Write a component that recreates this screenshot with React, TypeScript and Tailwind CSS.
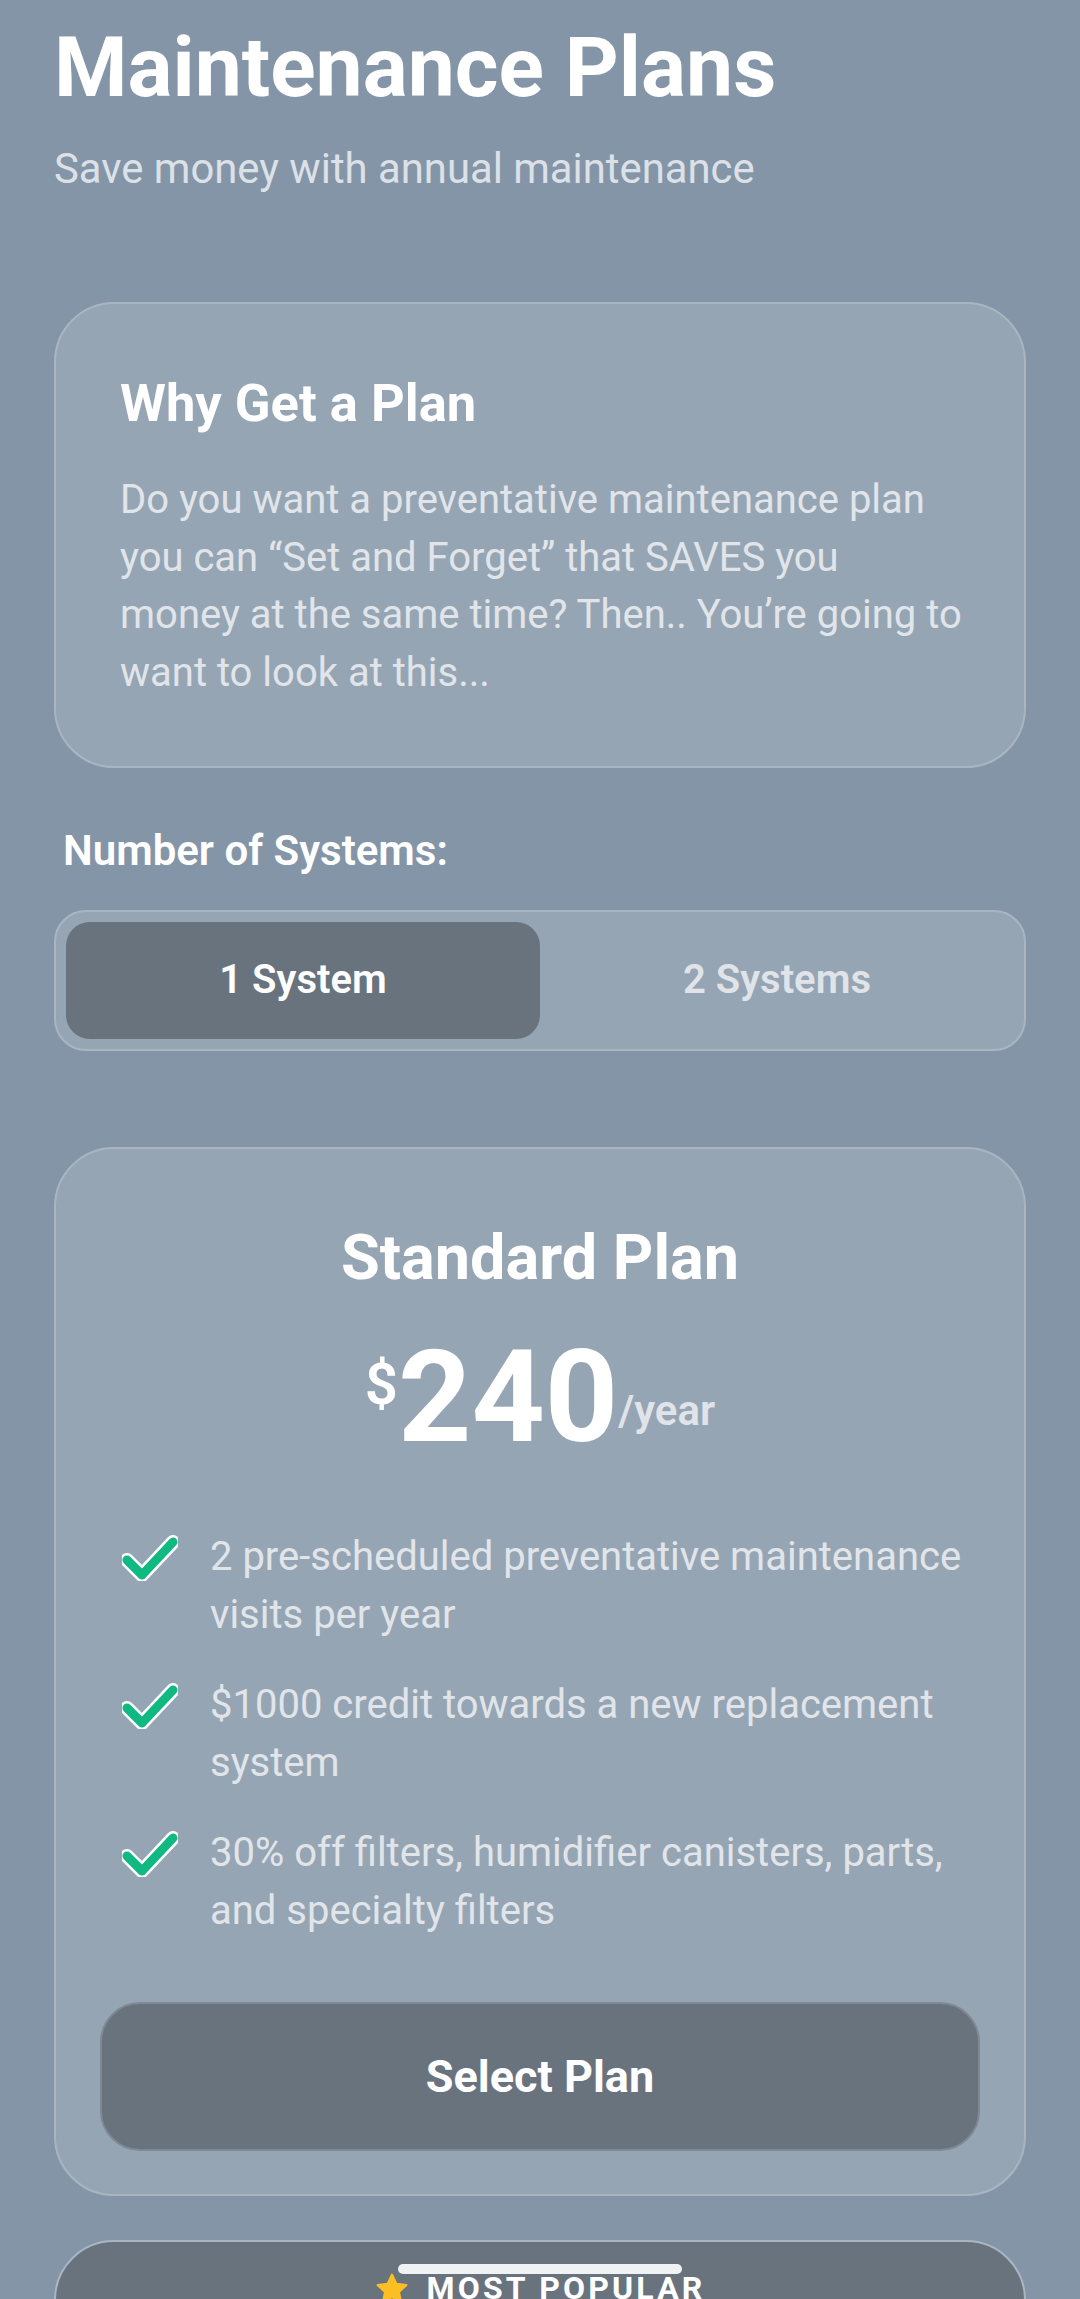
import { useState } from "react"

const features = [
  "2 pre-scheduled preventative maintenance visits per year",
  "$1000 credit towards a new replacement system",
  "30% off filters, humidifier canisters, parts, and specialty filters",
]

function Check() {
  return (
    <svg width="56" height="46" viewBox="0 0 56 46" className="shrink-0 mt-[7px]">
      <polyline points="5,25 20,40 51,7" fill="none" stroke="#ffffff" strokeWidth="14" strokeLinecap="round" strokeLinejoin="round" />
      <polyline points="5,25 20,40 51,7" fill="none" stroke="#10b981" strokeWidth="9" strokeLinecap="round" strokeLinejoin="round" />
    </svg>
  )
}

function Star() {
  return (
    <svg width="36" height="36" viewBox="0 0 24 24" className="shrink-0">
      <path
        d="M12 2.5l2.9 6.1 6.6.8-4.9 4.6 1.3 6.6L12 17.3l-5.9 3.3 1.3-6.6-4.9-4.6 6.6-.8z"
        fill="#fbbf24"
        stroke="#fbbf24"
        strokeWidth="1.5"
        strokeLinejoin="round"
      />
    </svg>
  )
}

export default function App() {
  const [systems, setSystems] = useState(1)

  return (
    <div className="relative h-[2299px] overflow-hidden bg-[#8495a7] px-[54px] [font-family:Roboto,sans-serif]">
      {/* Header */}
      <h1 className="pt-[18px] text-[84px] leading-[1.2] font-bold text-white">Maintenance Plans</h1>
      <p className="mt-[19px] text-[41.8px] leading-[1.5] text-[#dce1e7]">Save money with annual maintenance</p>

      {/* Intro card */}
      <div className="mt-[102px] rounded-[60px] border-2 border-[#a9b6c2] bg-[#95a5b4] pl-[64px] pr-[56px] pt-[68px] pb-[65px]">
        <h2 className="text-[52.5px] leading-[1.2] font-bold text-white">Why Get a Plan</h2>
        <p className="mt-[36px] text-[40px] leading-[57.5px] text-[#e1e5ea]">
          Do you want a preventative maintenance plan you can “Set and Forget” that SAVES you
          <br />
          money at the same time? Then.. You’re going to want to look at this...
        </p>
      </div>

      {/* System count toggle */}
      <div className="mt-[58px] pl-[9px] text-[42px] leading-[1.2] font-semibold text-white">Number of Systems:</div>
      <div className="mt-[33px] grid grid-cols-2 rounded-[32px] border-2 border-[#a9b6c2] bg-[#95a5b4] p-[10px]">
        {[1, 2].map((n) => (
          <button
            key={n}
            onClick={() => setSystems(n)}
            className={
              systems === n
                ? "h-[117px] rounded-[24px] bg-[#69737e] text-[40px] font-semibold text-white"
                : "h-[117px] rounded-[24px] text-[40px] font-semibold text-[#e0e4e9]"
            }
          >
            {n === 1 ? "1 System" : "2 Systems"}
          </button>
        ))}
      </div>

      {/* Standard plan */}
      <div className="mt-[96px] rounded-[60px] border-2 border-[#a9b6c2] bg-[#95a5b4] px-[44px] pt-[71px] pb-[43px]">
        <h3 className="text-center text-[63px] leading-[1.2] font-bold text-white">Standard Plan</h3>
        <div className="mt-[38px] flex items-start justify-center text-white">
          <span className="mt-[22px] text-[58px] leading-none font-semibold">$</span>
          <span className="text-[128px] leading-none font-bold">{systems === 1 ? "240" : "420"}</span>
          <span className="mb-[29px] self-end text-[42px] leading-none font-semibold text-[#e0e4e9]">/year</span>
        </div>

        <ul className="mt-[67px] flex flex-col gap-[32px] pl-[22px] pr-[10px]">
          {features.map((f) => (
            <li key={f} className="flex items-start gap-[32px]">
              <Check />
              <span className="text-[40px] leading-[58px] text-[#e1e5ea]">{f}</span>
            </li>
          ))}
        </ul>

        <button className="mt-[62px] h-[149px] w-full rounded-[40px] border-2 border-[#7f8995] bg-[#69737e] text-[45px] font-bold text-white">
          Select Plan
        </button>
      </div>

      {/* Premium plan */}
      <div className="mt-[44px] rounded-[60px] border-2 border-[#a9b6c2] bg-[#69737e] px-[44px] pt-[27px] pb-[60px]">
        <div className="flex items-center justify-center gap-[16px]">
          <Star />
          <span className="text-[32px] leading-[1.2] font-bold tracking-[0.1em] text-white">MOST POPULAR</span>
        </div>
        <h3 className="mt-[30px] text-center text-[63px] leading-[1.2] font-bold text-white">Premium Plan</h3>
      </div>

      {/* Gesture bar */}
      <div className="absolute bottom-[25px] left-1/2 h-[10px] w-[284px] -translate-x-1/2 rounded-full bg-[#f1f2f4]" />
    </div>
  )
}
